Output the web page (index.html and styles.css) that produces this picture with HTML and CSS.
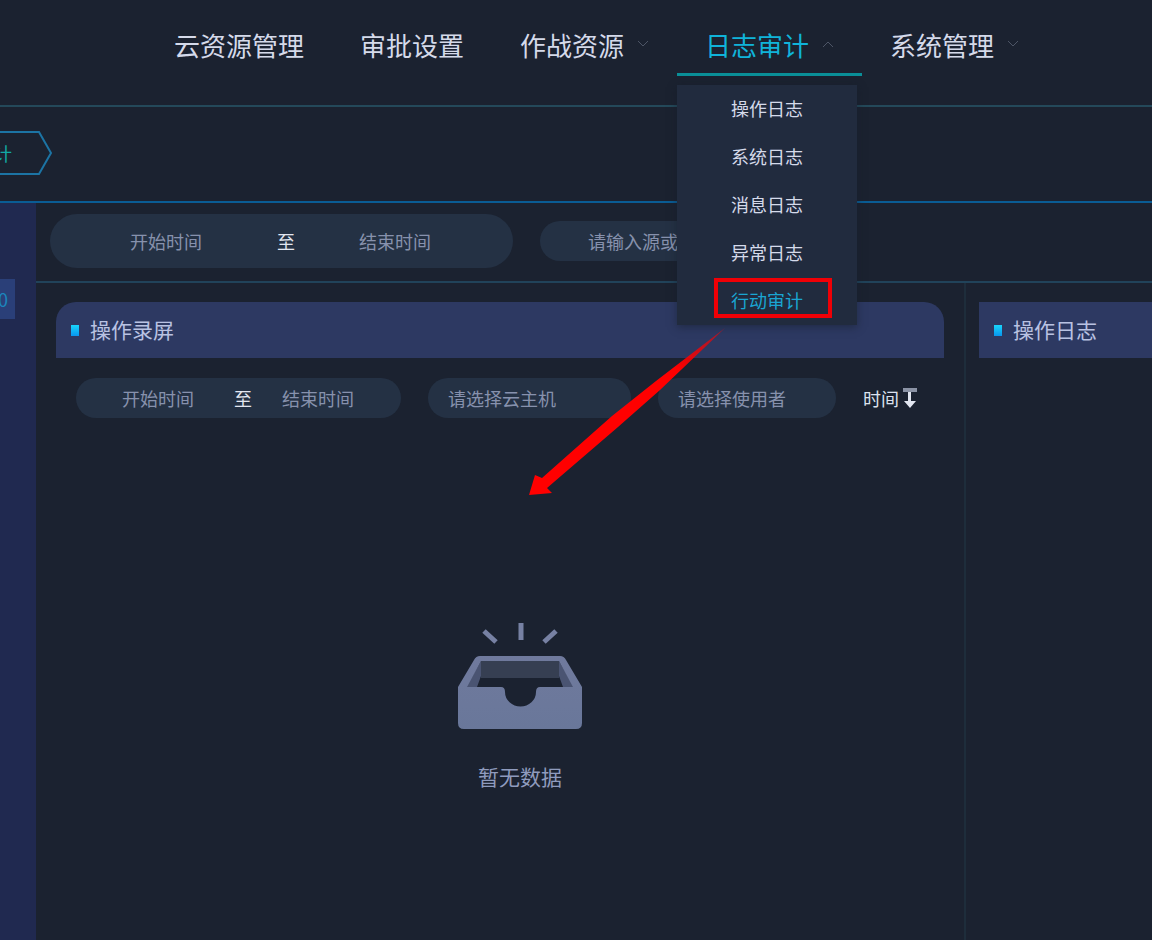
FILE: index.html
```html
<!DOCTYPE html>
<html lang="zh-CN">
<head>
    <meta charset="UTF-8">
    <meta name="viewport" content="width=device-width, initial-scale=1.0">
    <title>行动审计</title>
    <link rel="stylesheet" href="styles.css">
</head>
<body>
    <header class="topbar">
        <nav class="nav">
            <a class="nav_item" href="#">云资源管理</a>
            <a class="nav_item" href="#">审批设置</a>
            <a class="nav_item" href="#">作战资源
                <svg class="chevron" viewBox="0 0 12 8"><path d="M1 1l5 5 5-5"/></svg>
            </a>
            <div class="nav_group">
                <a class="nav_item active" href="#">日志审计
                    <svg class="chevron" viewBox="0 0 12 8"><path d="M1 7l5-5 5 5"/></svg>
                </a>
                <ul class="dropdown">
                    <li><a href="#">操作日志</a></li>
                    <li><a href="#">系统日志</a></li>
                    <li><a href="#">消息日志</a></li>
                    <li><a href="#">异常日志</a></li>
                    <li class="current"><a href="#">行动审计</a></li>
                </ul>
            </div>
            <a class="nav_item" href="#">系统管理
                <svg class="chevron" viewBox="0 0 12 8"><path d="M1 1l5 5 5-5"/></svg>
            </a>
        </nav>
    </header>

    <div class="crumbs">
        <a class="crumb" href="#">
            <svg class="crumb_shape" viewBox="0 0 53 44"><path d="M-2 1H39L51 22L39 43H-2"/></svg>
            <span>计</span>
        </a>
    </div>

    <div class="main">
        <aside class="sidebar">
            <div class="count">0</div>
        </aside>

        <div class="content">
            <form class="filter">
                <div class="pill range range_large">
                    <input type="text" placeholder="开始时间" aria-label="开始时间">
                    <span class="to">至</span>
                    <input type="text" placeholder="结束时间" aria-label="结束时间">
                </div>
                <input class="pill search" type="text" placeholder="请输入源或目标" aria-label="搜索">
            </form>

            <div class="panels">
                <section class="panel panel_record">
                    <h2 class="panel_title">操作录屏</h2>
                    <div class="tools">
                        <div class="pill range">
                            <input type="text" placeholder="开始时间" aria-label="录屏开始时间">
                            <span class="to">至</span>
                            <input type="text" placeholder="结束时间" aria-label="录屏结束时间">
                        </div>
                        <select class="pill host" aria-label="云主机">
                            <option>请选择云主机</option>
                        </select>
                        <select class="pill user" aria-label="使用者">
                            <option>请选择使用者</option>
                        </select>
                        <button class="sort" type="button">时间
                            <svg class="sort_icon" viewBox="0 0 14 20">
                                <path class="sort_bar" d="M0 0h14v4H0z"/>
                                <path d="M5 4h3v9h5l-6 7-6-7h4z"/>
                            </svg>
                        </button>
                    </div>
                    <div class="empty">
                        <svg class="empty_icon" viewBox="0 0 128 112">
                            <defs>
                                <linearGradient id="tray" x1="0" y1="0" x2="0" y2="1">
                                    <stop offset="0" stop-color="#707a9d"/>
                                    <stop offset="1" stop-color="#69779a"/>
                                </linearGradient>
                            </defs>
                            <g stroke="#7781a3" stroke-width="5">
                                <path d="M28 11l12 11M65 3v17M100 11l-12 11"/>
                            </g>
                            <!-- back and side walls -->
                            <path fill="#363f52" d="M25 41h78v17H25z"/>
                            <path fill="#4a5472" d="M25 41v15l-4 11H10zM103 41v15l4 11h11z"/>
                            <path fill="url(#tray)" fill-rule="evenodd" d="M24 36h80q4 0 6 4l16 27v36q0 6-6 6H8q-6 0-6-6V67l16-27q2-4 6-4zM25 41L11 67h34q4 0 4 5a15 14 0 0 0 31 0q0-5 4-5h33L103 41z"/>
                        </svg>
                        <p>暂无数据</p>
                    </div>
                </section>

                <section class="panel panel_log">
                    <h2 class="panel_title">操作日志</h2>
                </section>
            </div>
        </div>
    </div>

    <svg class="pointer" viewBox="0 0 198 170">
        <defs>
            <linearGradient id="fade" x1="1" y1="0" x2="0" y2="1">
                <stop offset="0" stop-color="#ff0000" stop-opacity="0.5"/>
                <stop offset="0.25" stop-color="#ff0000"/>
            </linearGradient>
        </defs>
        <path fill="url(#fade)" d="M197 1L128 54 84 89 14 151 7 148 1 168 24 166 19 161 90 100 132 63z"/>
    </svg>
</body>
</html>
```

FILE: styles.css
```css
*,
*::before,
*::after {
    box-sizing: border-box;
}

body {
    position: relative;
    display: flex;
    flex-direction: column;
    min-height: 100vh;
    margin: 0;
    background-color: #1b2230;
    color: #d5daea;
    font-family: "Noto Sans CJK SC", sans-serif;
    font-size: 18px;
    line-height: 24px;
    overflow-x: hidden;
}

a {
    color: inherit;
    text-decoration: none;
}

.topbar {
    height: 107px;
    padding: 17px 0 0 146px;
    border-bottom: 2px solid #24495a;
}

.nav {
    display: flex;
}

.nav_item {
    display: flex;
    align-items: center;
    gap: 13px;
    height: 59px;
    padding: 0 28px;
    border-bottom: 3px solid transparent;
    font-size: 26px;
    white-space: nowrap;
}

.nav_item.active {
    border-bottom-color: #0a8f98;
    color: #10b4da;
}

.chevron {
    width: 12px;
    height: 8px;
    margin-bottom: 2px;
    fill: none;
    stroke: #4d5566;
    stroke-width: 1;
}

.nav_group {
    position: relative;
}

.dropdown {
    position: absolute;
    top: 68px;
    left: 0;
    z-index: 2;
    width: 180px;
    margin: 0;
    padding: 0;
    list-style: none;
    background-color: #212b3e;
    box-shadow: 0 2px 8px rgba(20, 27, 40, 0.5);
}

.dropdown li {
    position: relative;
    display: flex;
    justify-content: center;
    align-items: center;
    height: 48px;
    padding-bottom: 2px;
}

.dropdown .current {
    color: #1aa5d2;
}

/* red mark around the entry */
.dropdown .current::after {
    content: "";
    position: absolute;
    top: 1px;
    right: 25px;
    width: 118px;
    height: 40px;
    border: 4px solid #f00006;
    pointer-events: none;
}

.crumbs {
    display: flex;
    align-items: center;
    height: 96px;
    padding-bottom: 2px;
    border-bottom: 2px solid #0a5c94;
}

.crumb {
    position: relative;
    display: flex;
    justify-content: flex-end;
    align-items: center;
    width: 53px;
    height: 44px;
    padding-right: 41px;
    color: #12a8a4;
}

.crumb_shape {
    position: absolute;
    inset: 0;
    fill: none;
    stroke: #1c74a4;
    stroke-width: 2;
}

.main {
    display: flex;
    flex: 1;
}

.sidebar {
    width: 36px;
    padding-top: 76px;
    background-color: #202950;
}

.count {
    display: flex;
    justify-content: flex-end;
    width: 15px;
    padding: 8px 7px 8px 0;
    background-color: #2a3f78;
    color: #1b86bd;
}

.content {
    display: flex;
    flex: 1;
    flex-direction: column;
    min-width: 0;
}

.filter {
    display: flex;
    align-items: center;
    gap: 27px;
    height: 80px;
    padding: 0 14px 2px;
    border-bottom: 2px solid #21435a;
}

.pill {
    height: 40px;
    border: none;
    border-radius: 27px;
    background-color: #243144;
    color: #8791ad;
    font: inherit;
}

.range {
    display: flex;
    align-items: center;
    width: 325px;
    padding: 0 46px;
}

.range input {
    width: 112px;
    padding: 0;
    border: none;
    background: none;
    color: inherit;
    font: inherit;
}

.range .to {
    margin-right: 30px;
    color: #e2e6f0;
}

.range input:last-child {
    flex: 1;
    min-width: 0;
}

.range_large {
    width: 463px;
    height: 54px;
    padding: 0 80px;
}

.range_large input {
    width: 147px;
}

.range_large .to {
    margin-right: 64px;
}

input::placeholder {
    color: #8791ad;
    opacity: 1;
}

.search {
    width: 270px;
    padding: 0 48px;
}

.panels {
    display: grid;
    flex: 1;
    grid-template-columns: 5fr 1fr;
}

.panel {
    padding-top: 19px;
}

.panel_record {
    padding-left: 20px;
    padding-right: 20px;
    border-right: 2px solid #1e2d3b;
}

.panel_log {
    padding-left: 13px;
}

.panel_title {
    display: flex;
    align-items: center;
    gap: 11px;
    height: 56px;
    margin: 0;
    padding: 0 15px 2px;
    background-color: #2d3962;
    color: #b9c2e2;
    font-size: 21px;
    font-weight: 400;
}

.panel_title::before {
    content: "";
    width: 8px;
    height: 11px;
    margin-top: 2px;
    background: linear-gradient(#19d5fa, #0896ee);
}

.panel_record .panel_title {
    border-radius: 20px 20px 0 0;
}

.tools {
    display: flex;
    align-items: center;
    gap: 27px;
    padding: 20px;
}

select.pill {
    padding: 0 20px;
    appearance: none;
}

.host {
    width: 203px;
}

.user {
    width: 178px;
}

.sort {
    display: flex;
    align-items: center;
    gap: 4px;
    padding: 0;
    border: none;
    background: none;
    color: #dde2ee;
    font: inherit;
    cursor: pointer;
}

.sort_icon {
    width: 14px;
    height: 20px;
    fill: #e2e6f0;
}

.sort_bar {
    fill: #8b93a5;
}

.empty {
    display: flex;
    flex-direction: column;
    align-items: center;
    gap: 32px;
    padding: 182px 0 0 40px;
    color: #8f9bbd;
    font-size: 21px;
}

.empty_icon {
    width: 128px;
    height: 112px;
}

.empty p {
    margin: 0;
}

/* arrow from the menu entry down to the record panel */
.pointer {
    position: absolute;
    top: 327px;
    left: 528px;
    z-index: 3;
    width: 198px;
    height: 170px;
    pointer-events: none;
}
```
